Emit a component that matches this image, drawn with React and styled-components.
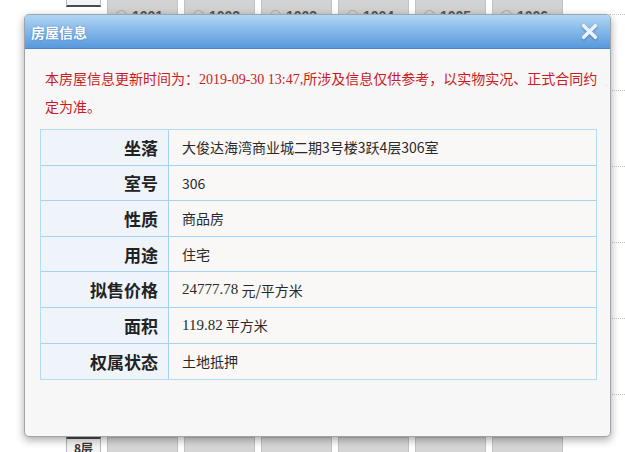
import React from 'react'
import styled, { createGlobalStyle } from 'styled-components'

const GlobalStyle = createGlobalStyle`
  html, body {
    margin: 0;
    padding: 0;
    background: #ffffff;
    font-family: "Noto Sans CJK SC", "Noto Sans", sans-serif;
  }
  #root {
    position: relative;
    width: 625px;
    height: 452px;
    overflow: hidden;
  }
`

const Page = styled.div`
  display: flex;
  flex-direction: column;
  margin-top: -61px;
`

const FloorRow = styled.div`
  display: flex;
  align-items: flex-start;
  gap: 6px;
  height: 76px;
  padding: 42px 0 0 66px;
  box-sizing: border-box;
`

const RowRule = styled.div`
  flex: 1;
  align-self: flex-end;
  margin-left: 40px;
  height: 1px;
  border-bottom: 1px dotted #c4c4c4;
`

const FloorLabel = styled.div`
  width: 35px;
  height: 26px;
  box-sizing: border-box;
  background: #f4f4f4;
  border: 1px solid #b8b8b8;
  border-top: 2px solid #4a4a4a;
  border-bottom: 2px solid #4a4a4a;
  font-size: 12px;
  font-weight: bold;
  color: #333;
  text-align: center;
  line-height: 18px;
`

const Unit = styled.div`
  width: 71px;
  height: 34px;
  box-sizing: border-box;
  background: linear-gradient(#dadada, #cfcfcf);
  border: 1px solid #c2c2c2;
  display: flex;
  align-items: flex-start;
  gap: 5px;
  padding: 26px 0 0 8px;
  font-family: "Liberation Sans", sans-serif;
  font-size: 14px;
  font-weight: bold;
  color: #555;
  line-height: 16px;
`

const UnitIcon = styled.span`
  width: 11px;
  height: 11px;
  margin-top: 2px;
  border: 1.5px solid #a8a8a8;
  border-radius: 50%;
  box-sizing: border-box;
`

const Dialog = styled.div`
  position: absolute;
  left: 24px;
  top: 14px;
  width: 587px;
  height: 423px;
  box-sizing: border-box;
  border: 1px solid #9ea4aa;
  border-radius: 5px;
  background: #f7f7f7;
  box-shadow: 0 3px 9px rgba(0, 0, 0, 0.35);
  display: flex;
  flex-direction: column;
  overflow: hidden;
`

const Header = styled.div`
  height: 34px;
  flex: none;
  display: flex;
  align-items: center;
  justify-content: space-between;
  padding: 0 12px 0 6px;
  box-sizing: border-box;
  background: linear-gradient(rgba(165, 208, 244, 0.86), rgba(82, 150, 220, 0.97));
  border-bottom: 1px solid #4586cc;
`

const Title = styled.div`
  color: #ffffff;
  font-size: 14px;
  font-weight: bold;
  text-shadow: 0 0 2px rgba(40, 90, 150, 0.6);
`

const CloseButton = styled.svg`
  width: 17px;
  height: 17px;
  filter: drop-shadow(0 1px 1px rgba(30, 70, 130, 0.5));
`

const Body = styled.div`
  padding: 16px 9px 0 20px;
  display: flex;
  flex-direction: column;
`

const Notice = styled.p`
  margin: 0;
  color: #cc1a24;
  font-size: 14px;
  line-height: 27px;
`

const Time = styled.span`
  font-family: "Liberation Serif", serif;
`

const InfoTable = styled.div`
  margin: 9px 0 0 -5px;
  width: 557px;
  display: grid;
  grid-template-columns: 128px 1fr;
  border: 1px solid #b3dbf3;
  box-sizing: border-box;
`

const Label = styled.div`
  height: 35.6px;
  box-sizing: border-box;
  display: flex;
  align-items: center;
  justify-content: flex-end;
  padding-right: 10px;
  background: #eef4fa;
  border-right: 1px solid #a6d2ef;
  border-bottom: ${p => (p.$last ? 'none' : '1px solid #a6d2ef')};
  font-size: 17px;
  font-weight: bold;
  color: #222;
`

const Value = styled.div`
  height: 35.6px;
  box-sizing: border-box;
  display: flex;
  align-items: center;
  padding-left: 13px;
  background: #f9f8f7;
  border-bottom: ${p => (p.$last ? 'none' : '1px solid #a6d2ef')};
  font-size: 14px;
  color: #2a2a2a;
  white-space: pre;
`

const Num = styled.span`
  font-family: "Liberation Serif", serif;
  font-size: 15px;
`

const floors = [
  ['10层', 10],
  ['9层', 9],
  ['9层', 9],
  ['9层', 9],
  ['9层', 9],
  ['9层', 9],
  ['8层', 8],
]

const rows = [
  ['坐落', '大俊达海湾商业城二期3号楼3跃4层306室'],
  ['室号', '306'],
  ['性质', '商品房'],
  ['用途', '住宅'],
  ['拟售价格', <><Num>24777.78</Num> 元/平方米</>],
  ['面积', <><Num>119.82</Num> 平方米</>],
  ['权属状态', '土地抵押'],
]

const App = () => {
  return (
    <>
      <GlobalStyle />
      <Page>
        {floors.map(([name, level], i) => (
          <FloorRow key={i}>
            <FloorLabel>{name}</FloorLabel>
            {[1, 2, 3, 4, 5, 6].map(n => (
              <Unit key={n}>
                <UnitIcon />
                {level * 100 + n}
              </Unit>
            ))}
            <RowRule />
          </FloorRow>
        ))}
      </Page>
      <Dialog>
        <Header>
          <Title>房屋信息</Title>
          <CloseButton viewBox="0 0 16 16">
            <path d="M2.5 2.5 L13.5 13.5 M13.5 2.5 L2.5 13.5" stroke="#eaf3fc" strokeWidth="3.4" strokeLinecap="round" />
          </CloseButton>
        </Header>
        <Body>
          <Notice>
            本房屋信息更新时间为：<Time>2019-09-30 13:47,</Time>所涉及信息仅供参考，以实物实况、正式合同约定为准。
          </Notice>
          <InfoTable>
            {rows.map(([label, value], i) => (
              <React.Fragment key={label}>
                <Label $last={i === rows.length - 1}>{label}</Label>
                <Value $last={i === rows.length - 1}>{value}</Value>
              </React.Fragment>
            ))}
          </InfoTable>
        </Body>
      </Dialog>
    </>
  )
}

export default App
